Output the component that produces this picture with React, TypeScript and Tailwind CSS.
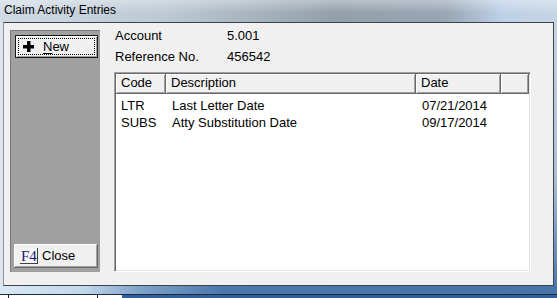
function PlusIcon() {
  return (
    <svg width="11" height="11" viewBox="0 0 11 11" className="shrink-0">
      <title>plus icon</title>
      <rect x="4" y="0" width="3.5" height="11" fill="#000" />
      <rect x="0" y="4" width="11" height="3.5" fill="#000" />
    </svg>
  );
}

const rows = [
  { code: "LTR", desc: "Last Letter Date", date: "07/21/2014" },
  { code: "SUBS", desc: "Atty Substitution Date", date: "09/17/2014" },
];

function HeaderCell({ w, label }: { w: string; label?: string }) {
  return (
    <div
      className={`${w} h-full shrink-0 bg-[#f0f0f0] border-r border-b border-[#696969] shadow-[inset_1px_1px_0_#ffffff,inset_-1px_-1px_0_#a0a0a0] pl-[5px] leading-[18px]`}
    >
      {label}
    </div>
  );
}

export default function App() {
  return (
    <div className="relative w-[557px] h-[298px] overflow-hidden bg-[#2f5f9e] font-['Liberation_Sans',Arial,sans-serif] text-[13px] text-black">
      <div className="flex flex-col w-[557px] h-[294px] bg-[linear-gradient(90deg,#cfdae5_0%,#bcc8d4_30%,#939faa_60%,#98a6b4_80%,#bdd0e8_90%,#c6d5e4_100%)]">
        {/* title bar */}
        <div className="h-[22px] shrink-0 pl-[4px] pt-[3px] text-[12px] leading-[14px] bg-[linear-gradient(180deg,rgba(255,255,255,0.35)_0%,rgba(255,255,255,0)_60%)]">
          Claim Activity Entries
        </div>

        <div className="flex flex-1">
          <div className="w-[3px] bg-[#dbe5ee]" />
          {/* client area */}
          <div className="flex w-[551px] h-[264px] bg-[#f0f0f0] border border-[#3e444a] border-l-[#8c939a]">
            {/* left command panel */}
            <div className="ml-[6px] mt-[7px] w-[90px] h-[242px] bg-[#a0a0a0] border-l border-t border-[#7a7a7a] border-b-[#e8e8e8] border-r-[#e8e8e8] flex flex-col">
              <div className="ml-[4px] mt-[4px] w-[83px] h-[23px] border border-[#1a1a1a] bg-[#f0f0f0] shadow-[inset_1px_1px_0_#ffffff,inset_-1px_-1px_0_#a0a0a0] p-[2px]">
                <div className="h-full border border-dotted border-black flex items-center pl-[4px] gap-[9px]">
                  <PlusIcon />
                  <span className="leading-[15px]">
                    <span className="underline underline-offset-[2px]">N</span>ew
                  </span>
                </div>
              </div>
              <div className="flex-1" />
              <div className="ml-[3px] mb-[4px] w-[84px] h-[24px] bg-[#f0f0f0] border-r border-b border-[#696969] shadow-[inset_1px_1px_0_#ffffff,inset_-1px_-1px_0_#a0a0a0] flex items-center pl-[6px] gap-[4px]">
                <span className="w-[18px] h-[16px] border-r border-b border-[#404040] bg-[#f4f4f4] text-[#1a1a70] font-['Liberation_Serif',serif] text-[15px] leading-[16px] pl-[1px]">
                  F4
                </span>
                <span className="leading-[16px]">Close</span>
              </div>
            </div>

            {/* right side */}
            <div className="ml-[14px] flex flex-col">
              <div className="mt-[4px] flex flex-col gap-[4px] pl-[1px]">
                <div className="flex h-[17px] leading-[17px]">
                  <span className="w-[112px]">Account</span>
                  <span>5.001</span>
                </div>
                <div className="flex h-[17px] leading-[17px]">
                  <span className="w-[112px]">Reference No.</span>
                  <span>456542</span>
                </div>
              </div>

              {/* list view */}
              <div className="mt-[7px] w-[417px] h-[200px] bg-white border border-[#a0a0a0] border-b-white border-r-white shadow-[inset_1px_1px_0_#696969,inset_-1px_-1px_0_#e3e3e3] pl-[1px] pt-[1px] flex flex-col">
                <div className="flex h-[20px] shrink-0">
                  <HeaderCell w="w-[50px]" label="Code" />
                  <HeaderCell w="w-[250px]" label="Description" />
                  <HeaderCell w="w-[85px]" label="Date" />
                  <HeaderCell w="w-[28px]" />
                </div>
                <div className="mt-[3px] flex flex-col">
                  {rows.map((r) => (
                    <div key={r.code} className="flex h-[17px] leading-[17px]">
                      <span className="w-[50px] pl-[5px]">{r.code}</span>
                      <span className="w-[250px] pl-[6px]">{r.desc}</span>
                      <span className="w-[85px] pl-[6px]">{r.date}</span>
                    </div>
                  ))}
                </div>
              </div>
            </div>
          </div>
          <div className="w-[3px] bg-[linear-gradient(180deg,#c6d5e4_0%,#a9bed6_60%,#4b77ad_100%)]" />
        </div>

        {/* bottom frame */}
        <div className="h-[8px] shrink-0 bg-[linear-gradient(90deg,#d9e8f4_0%,#c2d8ec_15%,#7fa2c8_25%,#4d78ad_40%,#4a74a8_100%)]" />
      </div>

      {/* window underneath */}
      <div className="flex h-[4px] border-t border-[#1b2a3d]">
        <div className="w-[122px] bg-white flex">
          <div className="ml-[8px] w-px bg-[#222]" />
          <div className="ml-[88px] w-px bg-[#222]" />
        </div>
        <div className="flex-1 bg-[#2f5f9e]" />
      </div>
    </div>
  );
}
